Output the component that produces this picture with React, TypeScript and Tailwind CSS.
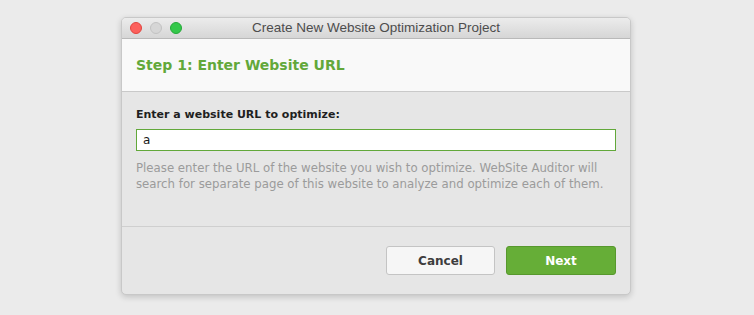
export default function App() {
  return (
    <div className="w-[754px] h-[315px] bg-[#ebebeb] pt-[17px] pl-[121px]" style={{ fontFamily: '"DejaVu Sans", sans-serif' }}>
      <div className="w-[510px] h-[278px] flex flex-col rounded-[5px] overflow-hidden border border-[#c8c8c8] shadow-[0_2px_6px_rgba(0,0,0,0.18)] bg-[#e6e6e6]">
        {/* title bar */}
        <div className="relative h-[21px] flex items-center justify-center bg-gradient-to-b from-[#ececec] to-[#d6d6d6] border-b border-[#b9b9b9]">
          <div className="absolute left-[8px] top-[4px] flex gap-[8px]">
            <span className="w-[12px] h-[12px] rounded-full bg-[#fc605c] border border-[#e0443e]" />
            <span className="w-[12px] h-[12px] rounded-full bg-[#d6d6d6] border border-[#c2c2c2]" />
            <span className="w-[12px] h-[12px] rounded-full bg-[#34c84a] border border-[#25a839]" />
          </div>
          <span className="text-[13.5px] text-[#4d4d4d]" style={{ fontFamily: '"Liberation Sans", sans-serif' }}>
            Create New Website Optimization Project
          </span>
        </div>
        {/* header */}
        <div className="h-[53px] bg-[#f9f9f9] border-b border-[#c9c9c9] flex items-center px-[14px]">
          <span className="text-[14px] font-bold text-[#62a83a]">Step 1: Enter Website URL</span>
        </div>
        {/* body */}
        <div className="h-[135px] border-b border-[#cfcfcf] px-[14px] pt-[15px]">
          <div className="text-[11px] font-bold text-[#1f1f1f] leading-[15px]">Enter a website URL to optimize:</div>
          <div className="mt-[7px] h-[22px] bg-white border border-[#62a83a] flex items-center px-[6px] text-[12px] text-[#1a1a1a]">
            a
          </div>
          <p className="mt-[9px] text-[11.75px] leading-[16px] text-[#9b9b9b]">
            Please enter the URL of the website you wish to optimize. WebSite Auditor will search for separate page of this website to analyze and optimize each of them.
          </p>
        </div>
        {/* footer */}
        <div className="flex-1 flex justify-end items-start gap-[11px] pt-[19px] pr-[14px]">
          <button className="w-[109px] h-[29px] rounded-[3px] bg-[#f6f6f6] border border-[#c4c4c4] text-[12px] font-bold text-[#3d3d3d]">
            Cancel
          </button>
          <button className="w-[110px] h-[29px] rounded-[3px] bg-[#66ae37] border border-[#57982d] text-[12px] font-bold text-white">
            Next
          </button>
        </div>
      </div>
    </div>
  )
}
